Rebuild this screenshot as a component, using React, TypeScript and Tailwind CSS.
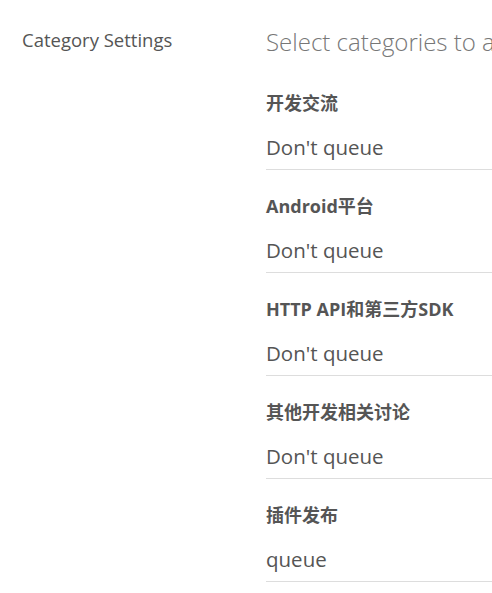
const categories = [
  { name: '开发交流', value: "Don't queue" },
  { name: 'Android平台', value: "Don't queue" },
  { name: 'HTTP API和第三方SDK', value: "Don't queue" },
  { name: '其他开发相关讨论', value: "Don't queue" },
  { name: '插件发布', value: 'queue' },
];

const font = "font-['Open_Sans','Noto_Sans_CJK_SC',sans-serif]";

export default function App() {
  return (
    <div className={`w-[492px] h-[593px] overflow-hidden bg-white text-[#555] ${font}`}>
      <div className="flex pt-[26px]">
        <div className="w-[266px] shrink-0 pl-[22px] pt-[2px]">
          <span className="text-[18.5px] leading-[24px]">Category Settings</span>
        </div>
        <div className="w-[300px] shrink-0">
          <h2 className="mb-[9px] whitespace-nowrap text-[24px] font-light leading-[32px] text-[#777]">
            Select categories to add to queue
          </h2>
          {categories.map((c) => (
            <div key={c.name} className="border-b border-[#ddd] pb-[8px] pt-[24px]">
              <div className="text-[18px] font-bold leading-[24px]">{c.name}</div>
              <div className="mt-[18px] text-[20.5px] leading-[28px]">{c.value}</div>
            </div>
          ))}
        </div>
      </div>
    </div>
  );
}
